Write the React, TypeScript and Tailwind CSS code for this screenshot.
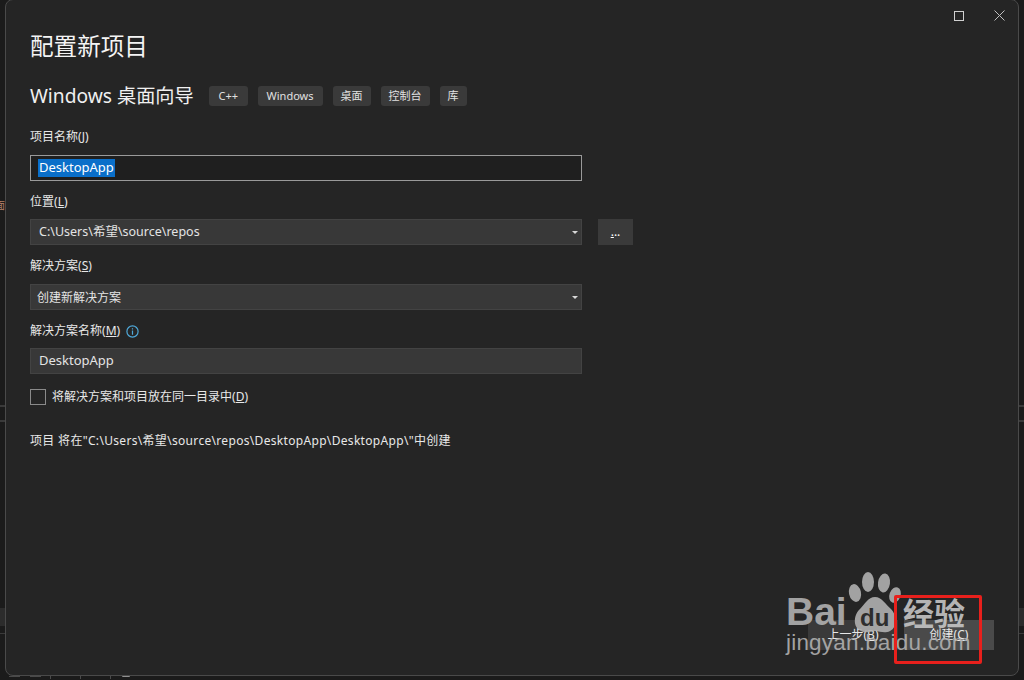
const FONT = "font-['Noto_Sans','Noto_Sans_CJK_SC',sans-serif]";

function Tag({ text, className }: { text: string; className: string }) {
  return (
    <span className={`h-5 flex items-center rounded-[3px] bg-[#3a3a3a] text-[11px] text-[#e0e0e0] ${className}`}>{text}</span>
  );
}

function Key({ k }: { k: string }) {
  return <>(<span className="underline">{k}</span>)</>;
}

function Arrow() {
  return (
    <svg width="6" height="3" viewBox="0 0 6 3" className="absolute right-[3px] top-[11px]">
      <path d="M0 0H6L3 3Z" fill="#d8d8d8" />
    </svg>
  );
}

function Field({ text, arrow, className }: { text: string; arrow?: boolean; className: string }) {
  return (
    <div className={`relative w-[552px] h-[26px] flex items-center bg-[#383838] border border-[#434343] text-[#e4e4e4] ${className}`}>
      {text}
      {arrow && <Arrow />}
    </div>
  );
}

function Label({ children }: { children: React.ReactNode }) {
  return <div className="h-[18px] flex items-center text-[12px] text-[#e8e8e8]">{children}</div>;
}

function Watermark() {
  return (
    <div className="absolute left-[786px] top-[570px] w-[195px] h-[90px] text-[#b0b0b0] opacity-90 pointer-events-none">
      <svg width="70" height="66" viewBox="0 0 70 66" className="absolute left-[52px] top-0" fill="#b0b0b0">
        <ellipse cx="17" cy="23" rx="6" ry="9" transform="rotate(-12 17 23)" />
        <ellipse cx="30" cy="12" rx="6" ry="10" />
        <ellipse cx="46" cy="13" rx="6" ry="9.5" transform="rotate(8 46 13)" />
        <ellipse cx="57" cy="25" rx="5.5" ry="8" transform="rotate(20 57 25)" />
        <path d="M37 27C30 27 27 34 22 39C16 44 14 57 23 61C29 64 33 61 37 61C42 61 46 64 52 61C60 57 59 45 53 39C47 34 44 27 37 27Z" />
      </svg>
      <span className="absolute left-[74px] top-[36px] text-[24px] leading-[24px] font-bold text-[#2e2e2e] font-['Liberation_Sans',sans-serif]">du</span>
      <span className="absolute left-0 top-[20px] text-[39px] leading-[44px] font-bold font-['Liberation_Sans',sans-serif]">Bai</span>
      <span className="absolute left-[117px] top-[24px] text-[31px] leading-[36px] font-bold text-[#c4c4c4] font-['Noto_Sans_CJK_SC',sans-serif]">经验</span>
      <span className="absolute left-0 top-[59px] text-[22.5px] leading-[28px] font-['Liberation_Sans',sans-serif] tracking-[0.2px]">jingyan.baidu.com</span>
    </div>
  );
}

function Backdrop() {
  return (
    <>
      <div className="absolute left-0 top-[405px] w-full h-[2px] bg-[#3a3a3a]" />
      <div className="absolute left-0 top-[420px] w-full h-[2px] bg-[#3a3a3a]" />
      <div className="absolute left-0 top-[608px] w-full h-[18px] bg-[#2c2c2c]" />
      <div className="absolute left-0 top-[633px] w-full h-px bg-[#3a3a3a]" />
      <span className="absolute left-[-5px] top-[199px] text-[10px] leading-[12px] text-[#b5806a]">面</span>
      {/* barra de status atras */}
      <div className="absolute left-[9px] top-[676px] w-[11px] h-px bg-[#4a4a4a]" />
      <div className="absolute left-[30px] top-[676px] w-[11px] h-px bg-[#4a4a4a]" />
      <div className="absolute left-[50px] top-[675px] w-px h-[4px] bg-[#4a4a4a]" />
      <div className="absolute left-[59px] top-[675px] w-[14px] h-px bg-[#4a4a4a]" />
      <div className="absolute left-[80px] top-[675px] w-px h-[4px] bg-[#4a4a4a]" />
      <div className="absolute left-[96px] top-[675px] w-px h-px bg-[#3f8fd0]" />
      <div className="absolute left-[110px] top-[675px] w-px h-[4px] bg-[#4a4a4a]" />
      <div className="absolute left-[122px] top-[676px] w-[8px] h-px rounded-b bg-[#909090]" />
    </>
  );
}

export default function App() {
  return (
    <div className={`relative w-[1024px] h-[680px] overflow-hidden bg-[#1b1b1b] ${FONT}`}>
      <Backdrop />

      {/* dialogo */}
      <div className="absolute left-[5px] top-[-1px] w-[1014px] h-[677px] rounded-[8px] border border-[#4a4a4a] bg-[#252525] pl-[24px] pt-[31px] flex flex-col">
        <div className="absolute right-[13px] top-[10px] flex items-center gap-[30px]">
          <svg width="10" height="10" viewBox="0 0 10 10" fill="none" stroke="#d0d0d0"><rect x="0.5" y="0.5" width="9" height="9" /></svg>
          <svg width="11" height="11" viewBox="0 0 11 11" fill="none" stroke="#c0c0c0"><path d="M0.5 0.5L10.5 10.5M10.5 0.5L0.5 10.5" /></svg>
        </div>

        <h1 className="h-[32px] flex items-center text-[23.6px] text-[#f4f4f4]">配置新项目</h1>

        <div className="mt-[23px] h-[20px] flex items-center">
          <span className="text-[19.2px] text-[#f0f0f0] w-[179px] whitespace-nowrap">Windows 桌面向导</span>
          <div className="flex gap-[10px]">
            <Tag text="C++" className="px-[9.5px]" />
            <Tag text="Windows" className="px-[9px]" />
            <Tag text="桌面" className="px-[8px]" />
            <Tag text="控制台" className="px-[8px]" />
            <Tag text="库" className="px-[8px]" />
          </div>
        </div>

        <div className="mt-[22px]"><Label>项目名称<Key k="J" /></Label></div>
        <div className="mt-[9px] w-[552px] h-[26px] flex items-center pl-[7px] bg-[#1f1f1f] border border-[#9a9a9a] text-[13px] text-white">
          <span className="bg-[#0a6fc9] h-[18px] flex items-center px-px">DesktopApp</span>
        </div>

        <div className="mt-[12px]"><Label>位置<Key k="L" /></Label></div>
        <div className="mt-[8px] flex gap-[16px]">
          <Field text="C:\Users\希望\source\repos" arrow className="pl-[8px] pt-px text-[12.5px]" />
          <div className="w-[35px] h-[26px] bg-[#3a3a3a] flex items-center justify-center text-[12px] text-white"><span><span className="underline">.</span>..</span></div>
        </div>

        <div className="mt-[12px]"><Label>解决方案<Key k="S" /></Label></div>
        <div className="mt-[9px]"><Field text="创建新解决方案" arrow className="pl-[6px] pt-px text-[12px]" /></div>

        <div className="mt-[12px] flex items-center gap-[6px]">
          <Label>解决方案名称<Key k="M" /></Label>
          <svg width="13" height="13" viewBox="0 0 13 13" fill="none" stroke="#4fa8d8" strokeWidth="1.2">
            <circle cx="6.5" cy="6.5" r="5.6" />
            <path d="M6.5 5.6V9.8M6.5 3.2V4.5" />
          </svg>
        </div>
        <div className="mt-[8px]"><Field text="DesktopApp" className="pl-[8px] text-[13px]" /></div>

        <div className="mt-[15px] h-[16px] flex items-center gap-[6px]">
          <div className="w-4 h-4 border border-[#8a8a8a] bg-[#252525]" />
          <span className="text-[12px] text-[#e8e8e8]">将解决方案和项目放在同一目录中<Key k="D" /></span>
        </div>

        <div className="mt-[27px] h-[18px] flex items-center text-[12px] tracking-[0.32px] text-[#e8e8e8]">项目 将在"C:\Users\希望\source\repos\DesktopApp\DesktopApp\"中创建</div>

        <div className="absolute right-[24px] bottom-[25px] flex gap-[6px]">
          <div className="w-[90px] h-[30px] bg-[#3a3a3a] flex items-center justify-center text-[12px] text-[#e8e8e8]">上一步<Key k="B" /></div>
          <div className="w-[90px] h-[30px] bg-[#4a4a4a] flex items-center justify-center text-[12px] text-[#e8e8e8]">创建<Key k="C" /></div>
        </div>
      </div>

      <Watermark />
      <div className="absolute left-[894px] top-[595px] w-[88px] h-[69px] border-[3px] border-[#e8201c] rounded-[2px]" />
    </div>
  );
}
